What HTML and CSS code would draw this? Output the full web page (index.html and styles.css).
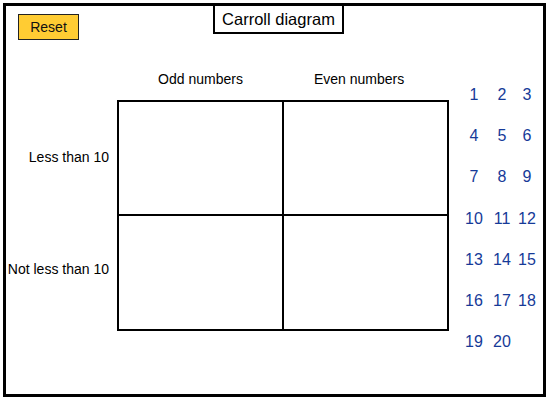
FILE: index.html
```html
<!DOCTYPE html>
<html>
<head>
<meta charset="utf-8">
<title>Carroll diagram</title>
<link rel="stylesheet" href="styles.css">
</head>
<body>
<div class="frame">
  <div class="header">
    <button class="reset">Reset</button>
    <div class="title">Carroll diagram</div>
  </div>
  <div class="main">
    <div class="diagram">
      <div class="corner"></div>
      <div class="head head-odd">Odd numbers</div>
      <div class="head head-even">Even numbers</div>
      <div class="label">Less than 10</div>
      <div class="cell cell-tl"></div>
      <div class="cell cell-tr"></div>
      <div class="label label-low">Not less than 10</div>
      <div class="cell cell-bl"></div>
      <div class="cell cell-br"></div>
    </div>
    <div class="numbers">
      <span class="num">1</span><span class="num">2</span><span class="num">3</span>
      <span class="num">4</span><span class="num">5</span><span class="num">6</span>
      <span class="num">7</span><span class="num">8</span><span class="num">9</span>
      <span class="num">10</span><span class="num">11</span><span class="num">12</span>
      <span class="num">13</span><span class="num">14</span><span class="num">15</span>
      <span class="num">16</span><span class="num">17</span><span class="num">18</span>
      <span class="num">19</span><span class="num">20</span>
    </div>
  </div>
</div>
</body>
</html>
```
FILE: styles.css
```css
html, body {
  margin: 0;
  padding: 0;
  background: #fff;
}
body {
  font-family: "Liberation Sans", Arial, sans-serif;
  color: #000;
}
.frame {
  margin: 3px;
  width: 537px;
  height: 388px;
  border: 3px solid #000;
}
.header {
  display: flex;
  align-items: flex-start;
  height: 34px;
}
.reset {
  margin: 8px 0 0 12px;
  width: 61px;
  height: 26px;
  box-sizing: border-box;
  border: 1px solid #222;
  background: #ffcc33;
  font-family: "Liberation Sans", Arial, sans-serif;
  font-size: 14px;
  color: #111;
  padding: 0;
  border-radius: 0;
}
.title {
  margin: -3px 0 0 134px;
  width: 131px;
  height: 31px;
  box-sizing: border-box;
  border: 2px solid #000;
  background: transparent;
  font-size: 16.5px;
  line-height: 28px;
  text-align: center;
}
.main {
  display: flex;
  margin-top: 26px;
}
.diagram {
  display: grid;
  grid-template-columns: 111px 165px 167px;
  grid-template-rows: 34px 114px 117px;
}
.head {
  font-size: 14px;
  line-height: 16px;
  padding-top: 5px;
}
.head-odd {
  text-align: center;
  padding-left: 2px;
}
.head-even {
  padding-left: 32px;
}
.label {
  font-size: 14px;
  text-align: right;
  padding-right: 8px;
  align-self: center;
  white-space: nowrap;
}
.label-low {
  margin-bottom: 8px;
}
.cell {
  border-left: 2px solid #000;
  border-top: 2px solid #000;
}
.cell-tr, .cell-br {
  border-right: 2px solid #000;
}
.cell-bl, .cell-br {
  border-bottom: 2px solid #000;
}
.numbers {
  display: grid;
  grid-template-columns: 28px 28px 22px;
  grid-auto-rows: 41.2px;
  margin: 8px 0 0 11px;
  align-self: flex-start;
}
.num {
  font-size: 16px;
  line-height: 41px;
  text-align: center;
  color: #163a98;
}
```
